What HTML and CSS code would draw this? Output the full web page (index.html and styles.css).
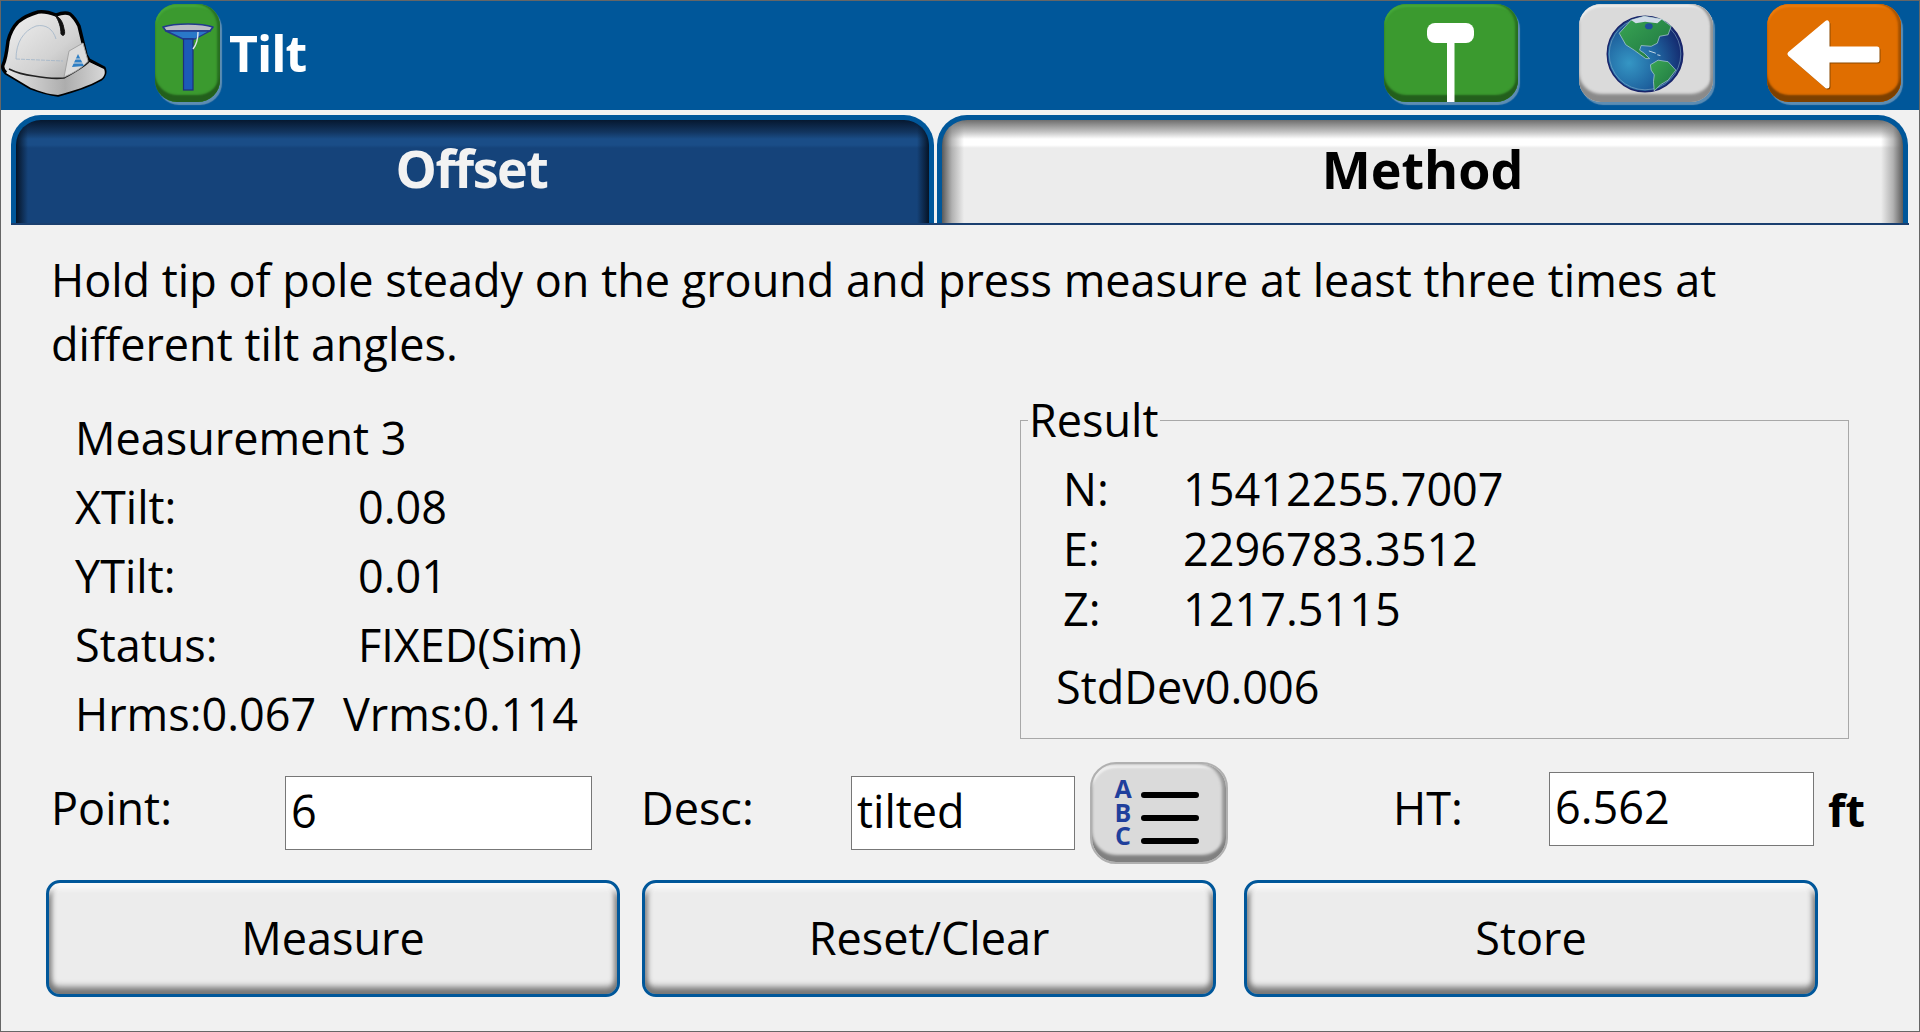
FILE: index.html
```html
<!DOCTYPE html>
<html lang="en">
<head>
<meta charset="utf-8">
<title>Tilt</title>
<link rel="stylesheet" href="styles.css">
</head>
<body>
<div class="app">
  <header class="topbar">
    <svg class="hat" viewBox="0 0 110 100" aria-hidden="true">
      <defs>
        <linearGradient id="hatFill" x1="0" y1="0" x2="1" y2="1">
          <stop offset="0" stop-color="#f2f2f2"/><stop offset=".5" stop-color="#d2d2d2"/><stop offset="1" stop-color="#8e8e8e"/>
        </linearGradient>
        <linearGradient id="brimFill" x1="0" y1="0" x2="1" y2="0">
          <stop offset="0" stop-color="#e6e6e6"/><stop offset=".6" stop-color="#adadad"/><stop offset="1" stop-color="#d8d8d8"/>
        </linearGradient>
      </defs>
      <path d="M2 64C5 58 6 48 7 40 9 32 12 26 17 21 24 15 30 13 37 11 44 10 50 12 55 14 60 12 65 11 69 13 74 17 76 21 78 25L85 54 88 59 103 67C105 71 103 76 100 78 88 85 72 90 57 94 46 93 38 90 30 87L5 72C2 69 1 67 2 64Z" fill="url(#hatFill)" stroke="#000" stroke-width="3.4" stroke-linejoin="round"/>
      <path d="M8 68C16 72 25 74 33 75 44 77 54 78 63 77 72 72 80 68 88 61L103 68C105 72 103 76 100 78 88 85 72 90 57 94 46 93 38 90 30 87L5 72Z" fill="url(#brimFill)"/>
      <path d="M8 68C16 72 25 74 33 75 44 77 54 78 63 77 72 72 80 68 88 61" fill="none" stroke="#222" stroke-width="1.6"/>
      <path d="M54 14C58 20 60 26 60 33 62 36 65 34 63 28 62 22 60 17 54 14Z" fill="#111" stroke="#111"/>
      <path d="M15 58C15 42 22 30 35 25 45 23 52 28 55 38" fill="none" stroke="#9fb4c8" stroke-width=".8"/>
      <path d="M15 58L62 60" fill="none" stroke="#9fb4c8" stroke-width=".8" stroke-dasharray="4 1"/>
      <path d="M63 76L68 50 82 42 87 60C80 68 72 72 63 76Z" fill="#dcdcdc" stroke="#a4a4a4"/>
      <path d="M71 66L77 53 83 65Z" fill="#2f7fc4"/>
      <path d="M72 62H82M74 58H80" stroke="#dcdcdc" stroke-width="1.1"/>
    </svg>
    <div class="icon-btn green tilt-btn">
      <svg viewBox="0 0 65 98" aria-hidden="true">
        <path d="M8 23C20 19 46 19 58 23L55 27H11Z" fill="#b9bcc4" stroke="#223a8c" stroke-width="1.6" stroke-linejoin="round"/>
        <path d="M11 27H55L40 35H28Z" fill="#2a78c8" stroke="#223a8c" stroke-width="1.4" stroke-linejoin="round"/>
        <rect x="28.5" y="35" width="9.5" height="51" fill="#1c5ab8" stroke="#1c2f7c" stroke-width="1.2"/>
        <path d="M43 28C43 36 42 40 38 45" fill="none" stroke="#dfe4ee" stroke-width="1.4"/>
      </svg>
    </div>
    <h1 class="title">Tilt</h1>
    <div class="actions">
      <div class="icon-btn green wide">
        <svg viewBox="0 0 134 98" aria-hidden="true">
          <rect x="43" y="19" width="47" height="20" rx="8" fill="#fff"/>
          <rect x="63" y="37" width="7.5" height="61" fill="#fff"/>
        </svg>
      </div>
      <div class="icon-btn grey wide">
        <svg viewBox="0 0 134 98" aria-hidden="true">
          <defs>
            <radialGradient id="sea" cx=".29" cy=".62" r=".78">
              <stop offset="0" stop-color="#3596c4"/><stop offset=".5" stop-color="#1f639f"/><stop offset="1" stop-color="#121f66"/>
            </radialGradient>
            <linearGradient id="land" x1="0" y1="0" x2="1" y2="1">
              <stop offset="0" stop-color="#3aa654"/><stop offset="1" stop-color="#1d7440"/>
            </linearGradient>
          </defs>
          <g transform="translate(27.5 11.5) scale(.77)">
            <circle cx="50" cy="50" r="49" fill="url(#sea)" stroke="#18246a" stroke-width="2"/>
            <circle cx="50" cy="50" r="46.5" fill="none" stroke="#8fb2cc" stroke-width=".7"/>
            <path d="M16.5 23L32 6 49 1 72 5 84 14 80 25 69 27 66 36 58 40 45 39 43 45 49 49 56 56 51 56 36 45 25 38Z" fill="url(#land)" stroke="#b6d0dc" stroke-width=".9" stroke-linejoin="round"/>
            <path d="M57 64L67 58 80 60 90 71 80 84 70 90 62 98 61 86 62 77 58 71Z" fill="url(#land)" stroke="#b6d0dc" stroke-width=".9" stroke-linejoin="round"/>
            <path d="M32 6L49 1 72 5 66 10 50 8 38 10Z" fill="#cfdbe8"/>
            <ellipse cx="55" cy="14" rx="5" ry="4" fill="#1e4f9c"/>
            <path d="M55 46L64 49M66 51L70 52" stroke="#cfe0ea" stroke-width="1.2"/>
          </g>
        </svg>
      </div>
      <div class="icon-btn orange wide">
        <svg viewBox="0 0 134 98" aria-hidden="true">
          <path d="M24 51L61 20V46H111V57H61V83Z" fill="#8a4800" stroke="#8a4800" stroke-width="5" stroke-linejoin="round"/>
          <path d="M23 50L60 19V45H110V56H60V82Z" fill="#fff" stroke="#fff" stroke-width="5" stroke-linejoin="round"/>
        </svg>
      </div>
    </div>
  </header>

  <nav class="tabs">
    <div class="tab active">Offset</div>
    <div class="tab">Method</div>
  </nav>

  <main class="content">
    <p class="hint">Hold tip of pole steady on the ground and press measure at least three times at different tilt angles.</p>

    <section class="data">
      <div class="readings">
        <div class="reading-head">Measurement 3</div>
        <div class="reading"><span class="label">XTilt:</span><span>0.08</span></div>
        <div class="reading"><span class="label">YTilt:</span><span>0.01</span></div>
        <div class="reading"><span class="label">Status:</span><span>FIXED(Sim)</span></div>
        <div class="reading rms"><span class="rms-h">Hrms:0.067</span><span>Vrms:0.114</span></div>
      </div>
      <fieldset class="result">
        <legend>Result</legend>
        <div class="coord"><span class="axis">N:</span><span>15412255.7007</span></div>
        <div class="coord"><span class="axis">E:</span><span>2296783.3512</span></div>
        <div class="coord"><span class="axis">Z:</span><span>1217.5115</span></div>
        <div class="stddev">StdDev0.006</div>
      </fieldset>
    </section>

    <section class="entry">
      <span class="entry-label point-label">Point:</span>
      <div class="field point-field">6</div>
      <span class="entry-label desc-label">Desc:</span>
      <div class="field desc-field">tilted</div>
      <div class="list-btn">
        <svg viewBox="0 0 134 98" aria-hidden="true">
          <text class="abc" x="31" y="34">A</text>
          <text class="abc" x="31" y="58">B</text>
          <text class="abc" x="31" y="81">C</text>
          <path d="M52 31H104M52 54H104M52 77H104" stroke="#000" stroke-width="6" stroke-linecap="round"/>
        </svg>
      </div>
      <span class="entry-label ht-label">HT:</span>
      <div class="field ht-field">6.562</div>
      <span class="unit">ft</span>
    </section>

    <section class="commands">
      <div class="cmd">Measure</div>
      <div class="cmd">Reset/Clear</div>
      <div class="cmd">Store</div>
    </section>
  </main>
</div>
</body>
</html>
```

FILE: styles.css
```css
* { box-sizing: border-box; }
html, body { margin: 0; padding: 0; }
body { width: 1920px; height: 1032px; overflow: hidden; background: #f1f1f1; font-family: "Open Sans", "Noto Sans", sans-serif; color: #000; }

.app { width: 1920px; height: 1032px; border: 1px solid #666; display: flex; flex-direction: column; background: #f1f1f1; }

.topbar { height: 109px; background: #00579a; display: flex; align-items: flex-start; flex: none; }
.hat { width: 110px; height: 100px; flex: none; }
.tilt-btn { margin-left: 44px; margin-top: 3px; width: 65px; }
.title { margin: 18px 0 0 9px; font-size: 50px; line-height: 68px; font-weight: 700; color: #fff; letter-spacing: -1px; }
.actions { margin-left: auto; margin-right: 18px; margin-top: 3px; display: flex; }
.actions .icon-btn + .icon-btn { margin-left: 61px; }
.actions .icon-btn:last-child { margin-left: 54px; }

.icon-btn { height: 98px; border-radius: 22px; flex: none; overflow: hidden; }
.icon-btn svg { display: block; width: 100%; height: 100%; }
.wide { width: 134px; }
.green { background: #3b9a2f; box-shadow: inset 0 -7px 2px #235f1c, inset -3px 0 2px #2a7222, inset 0 3px 2px #46a83a, 2px 3px 1px rgba(170,185,200,.55); }
.grey { background: #dadada; box-shadow: inset 0 -8px 3px #8a8a8a, inset -3px 0 2px #9a9a9a, inset 0 3px 2px #eee, 2px 3px 1px rgba(170,185,200,.55); }
.orange { background: #e06e00; box-shadow: inset 0 -7px 2px #7c4000, inset -3px 0 2px #a85300, inset 0 3px 2px #ee7c0c, 2px 3px 1px rgba(170,185,200,.55); }

.tabs { margin: 5px 10px 0 10px; height: 110px; display: flex; gap: 3px; border-bottom: 2px solid #1a3f6f; flex: none; }
.tab { border: 5px solid #00579a; border-bottom: 0; border-radius: 30px 30px 0 0; text-align: center; font-size: 52px; font-weight: 700; line-height: 96px; }
.tab:first-child { width: 923px; letter-spacing: -1.5px; padding-right: 2px; }
.tab:last-child {
  width: 971px;
  line-height: 98px;
  background:
    linear-gradient(90deg, #5a5a5a, rgba(130,130,130,.55) 10px, rgba(236,236,236,0) 22px),
    linear-gradient(270deg, #5a5a5a, rgba(130,130,130,.55) 10px, rgba(236,236,236,0) 22px),
    linear-gradient(180deg, #6e6e6e 0, #c4c4c4 12px, #fff 19px, #fff 25px, #ececec 28px);
}
.tab.active {
  color: #f2f2f2;
  background:
    linear-gradient(90deg, #061426, rgba(21,67,122,0) 12px),
    linear-gradient(270deg, #061426, rgba(21,67,122,0) 12px),
    linear-gradient(180deg, #061830 0, #12355f 12px, #1a4d87 19px, #1a4d87 25px, #15437a 28px);
}

.content { flex: 1; display: flex; flex-direction: column; font-size: 45px; }
.hint { margin: 23px 0 0 50px; width: 1720px; line-height: 64px; }

.data { display: flex; align-items: flex-start; justify-content: space-between; margin-top: 2px; padding: 0 70px 0 74px; }
.readings { padding-top: 25px; }
.reading-head, .reading { height: 69px; line-height: 69px; }
.reading { display: flex; }
.label { width: 283px; }
.rms-h { width: 268px; }

.result { width: 829px; height: 341px; margin: 20px 0 0 0; padding: 0 0 0 42px; border: 1px solid #a8a8a8; }
.result legend { padding: 0 1px; margin-left: -35px; line-height: 44px; }
.coord { display: flex; height: 60px; line-height: 60px; }
.coord:first-of-type { margin-top: 17px; }
.axis { width: 120px; }
.stddev { margin: 18px 0 0 -7px; line-height: 60px; }

.entry { display: flex; align-items: center; height: 102px; margin-top: 14px; padding-left: 50px; }
.entry-label { flex: none; margin-bottom: 12px; }
.point-label { width: 234px; }
.desc-label { width: 210px; margin-left: 49px; }
.ht-label { width: 156px; margin-left: 165px; }
.field { height: 74px; line-height: 68px; padding-left: 5px; background: #fff; border: 1px solid #777; flex: none; }
.point-field { width: 307px; }
.desc-field { width: 224px; }
.ht-field { width: 265px; margin-top: -8px; }
.unit { margin: 0 0 8px 14px; font-weight: 700; }

.list-btn { width: 138px; height: 102px; margin-left: 15px; border-radius: 26px; background: #dadada; flex: none; border: 2px solid #b0b0b0; box-shadow: inset 0 -7px 3px #808080, inset -4px 0 3px #999, inset 0 4px 2px #eee; }
.list-btn svg { display: block; width: 134px; height: 98px; }
.abc { font-family: "Open Sans", sans-serif; font-size: 25px; font-weight: 700; fill: #1f3f9c; text-anchor: middle; }

.commands { display: flex; margin-top: 16px; padding-left: 45px; }
.cmd { width: 574px; height: 117px; border: 3px solid #00579a; border-radius: 14px; background: #ececec; text-align: center; line-height: 110px; box-shadow: inset 0 -10px 6px -3px #777, inset 0 10px 5px -4px #fafafa, inset 5px 0 5px -2px #888, inset -5px 0 5px -2px #888; }
.cmd + .cmd { margin-left: 22px; }
.cmd:last-child { margin-left: 28px; }
```
